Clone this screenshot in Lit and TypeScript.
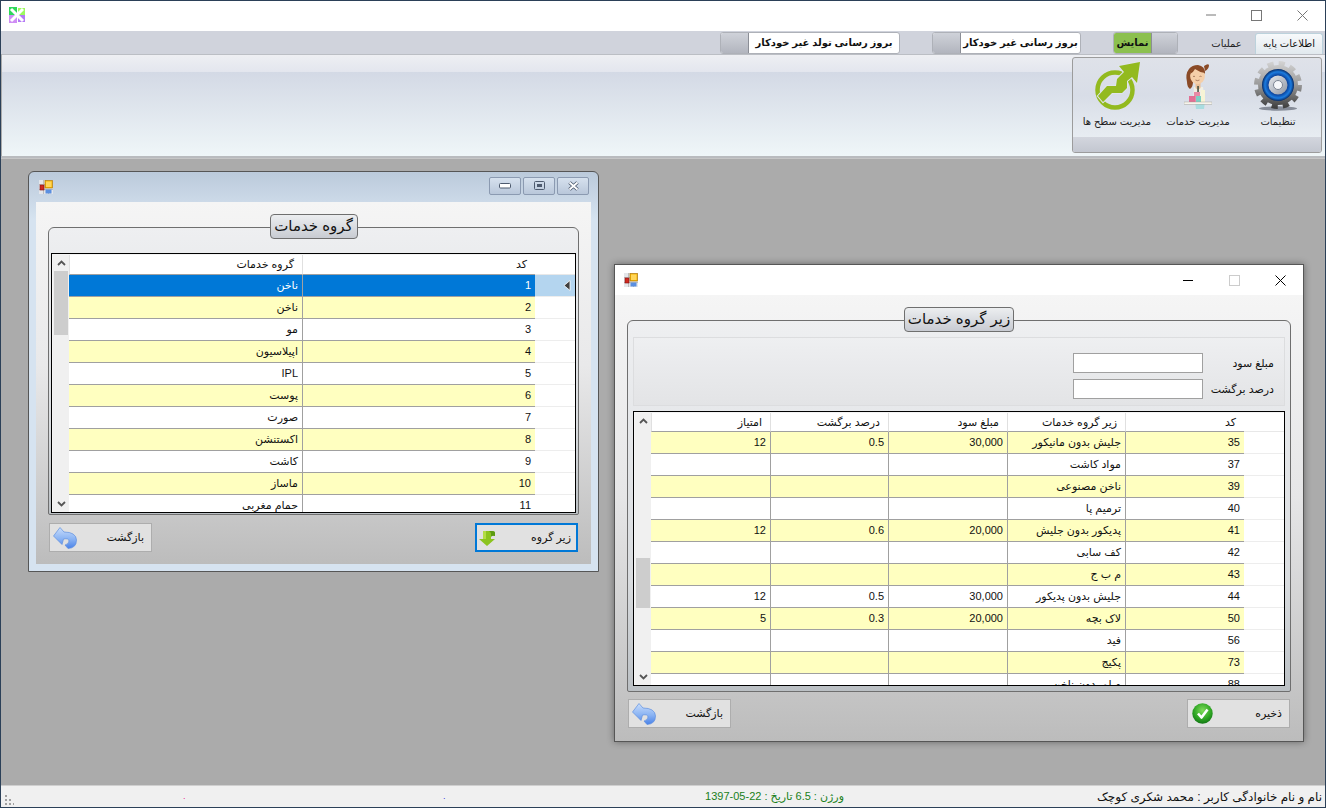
import { LitElement, html, css, svg } from "lit";
import { customElement } from "lit/decorators.js";

const groupRows: [string, string][] = [
  ["1", "ناخن"], ["2", "ناخن"], ["3", "مو"], ["4", "اپیلاسیون"], ["5", "IPL"], ["6", "پوست"],
  ["7", "صورت"], ["8", "اکستنشن"], ["9", "کاشت"], ["10", "ماساز"], ["11", "حمام مغربی"],
];
const subRows: string[][] = [
  ["35", "جلیش بدون مانیکور", "30,000", "0.5", "12"],
  ["37", "مواد کاشت", "", "", ""],
  ["39", "ناخن مصنوعی", "", "", ""],
  ["40", "ترمیم پا", "", "", ""],
  ["41", "پدیکور بدون جلیش", "20,000", "0.6", "12"],
  ["42", "کف سابی", "", "", ""],
  ["43", "م ب ج", "", "", ""],
  ["44", "جلیش بدون پدیکور", "30,000", "0.5", "12"],
  ["50", "لاک بچه", "20,000", "0.3", "5"],
  ["56", "فید", "", "", ""],
  ["73", "پکیج", "", "", ""],
  ["88", "میلو بدون ناخن", "", "", ""],
];

const winIcon = () => svg`<svg class="win-icon" viewBox="0 0 14 14" width="14" height="14">
  <rect x="0" y="0" width="14" height="14" fill="#e4e6ea"/>
  <path d="M0 4.5H6M0 9.5H14M4.5 0V14M9.5 9V14" stroke="#bdbdbd" stroke-width="1" fill="none"/>
  <rect x="6" y="0.5" width="7.5" height="7.5" fill="#f7b500" stroke="#b07a10" stroke-width=".7"/>
  <rect x="7" y="1.5" width="5.5" height="5.5" fill="#ffd65a"/>
  <rect x="1" y="5" width="4" height="5" fill="#d02a20" stroke="#801010" stroke-width=".6"/>
  <rect x="6.5" y="9.5" width="6" height="4" fill="#5b8fe0"/>
</svg>`;

const backIcon = () => svg`<svg class="btn-ico" viewBox="0 0 24 22" width="24" height="22">
  <defs><linearGradient id="bk" x1="0" y1="0" x2="0" y2="1"><stop offset="0" stop-color="#c8ddfb"/><stop offset=".55" stop-color="#8ab3f3"/><stop offset="1" stop-color="#4a82e8"/></linearGradient></defs>
  <path d="M7 .5 L.5 9 L9 17.5 L10.5 12 Q16 11 16 14 Q16 17 12 18 L15 21.5 Q23.5 21 23.5 13 Q23 5 11 5 Z" fill="url(#bk)" stroke="#5f8fe0" stroke-width=".7"/>
</svg>`;

const downIcon = () => svg`<svg class="btn-ico" viewBox="0 0 16 16" width="16" height="16">
  <path d="M4 1 H13 Q16 1 16 3 V6 Q14 5 12 6 V9 H16 L8 16 L0 9 H4 Z" fill="#8cc41f"/>
  <path d="M10 1 H13 Q16 1 16 3 V6 Q13 5 12 7 V3 Q11 2 10 1Z" fill="#5c9a12"/>
  <path d="M4 9 V1 H7 V9Z" fill="#b3dc45"/>
</svg>`;

const checkIcon = () => svg`<svg class="btn-ico" viewBox="0 0 21 21" width="21" height="21">
  <defs><radialGradient id="ck" cx=".5" cy=".35" r=".7"><stop offset="0" stop-color="#7fdc5a"/><stop offset=".6" stop-color="#2ea523"/><stop offset="1" stop-color="#0d6e12"/></radialGradient></defs>
  <circle cx="10.5" cy="10.5" r="10.2" fill="url(#ck)"/>
  <path d="M6 10.5 L9.5 14.5 L15.5 6.5" fill="none" stroke="#fff" stroke-width="2.6" stroke-linejoin="round"/>
</svg>`;

const gearIcon = () => svg`<svg viewBox="0 0 48 50" width="48" height="50">
  <defs>
    <linearGradient id="gr" gradientUnits="userSpaceOnUse" x1="0" y1="0" x2="0" y2="48"><stop offset="0" stop-color="#d4d4d4"/><stop offset=".5" stop-color="#989898"/><stop offset="1" stop-color="#3a3a3a"/></linearGradient>
    <radialGradient id="bl" cx=".5" cy=".5" r=".5"><stop offset=".58" stop-color="#0a3f98"/><stop offset=".82" stop-color="#1c7ce0"/><stop offset="1" stop-color="#062a66"/></radialGradient>
    <linearGradient id="dk" x1="0" y1="0" x2="1" y2="1"><stop offset="0" stop-color="#e6e8ec"/><stop offset="1" stop-color="#8f96a3"/></linearGradient>
  </defs>
  <ellipse cx="24" cy="47.5" rx="19" ry="2.2" fill="#4c5360" opacity=".6"/>
  <circle cx="24" cy="24" r="21" fill="none" stroke="url(#gr)" stroke-width="6" stroke-dasharray="6 5"/>
  <circle cx="24" cy="24" r="20" fill="url(#gr)"/>
  <circle cx="24" cy="24" r="16" fill="url(#bl)"/>
  <circle cx="24" cy="24" r="9.5" fill="url(#dk)"/>
  <circle cx="24" cy="24" r="4.5" fill="#f6f7fa" stroke="#7d8593"/>
</svg>`;

const womanIcon = () => svg`<svg viewBox="0 0 28 46" width="28" height="46">
  <path d="M11 38 H21 L20 46 H12 Z" fill="#a9dde0"/>
  <path d="M10 24 H19 L21 38 H9 Z" fill="#f2efe3"/>
  <path d="M11.5 19 H16.5 V25 L14 27 L11.5 25 Z" fill="#eabf98"/>
  <path d="M13.3 23 H14.8 V31 H13.3Z" fill="#3c4a3c"/>
  <path d="M20 3 Q24 0 25 2 Q25 6 21 8Z" fill="#8a4a26"/>
  <path d="M5 6 Q1 11 3 19 Q3 24 6 26 Q9 24 9 19 Q16 18 21 10 Q21 3 14 2 Q8 2 5 6Z" fill="#8a4a26"/>
  <ellipse cx="13.5" cy="13" rx="7.4" ry="8.3" fill="#f5cfa9"/>
  <path d="M6 11 Q8 4 14 4 Q20 4 21 10 Q15 9 11 6 Q9 10 6 11Z" fill="#8a4a26"/>
  <path d="M9 13.5 Q10 13 11 13.5 M15.5 13.5 Q16.5 13 17.5 13.5 M11.5 17 Q13.5 18.3 15.5 17" stroke="#7a4a30" stroke-width=".6" fill="none"/>
  <rect x="10" y="29" width="6" height="10" fill="#e88aa6"/>
  <rect x="12" y="33" width="5" height="6" fill="#7ccfc4"/>
  <rect x="17" y="27" width="4" height="12" fill="#f7f4d6"/>
  <rect x="5" y="33" width="6" height="6" fill="#e26f94"/>
  <rect x="0" y="39" width="28" height="2.2" fill="#f7f4ec" stroke="#9a9a90" stroke-width=".4"/>
</svg>`;

const growthIcon = () => svg`<svg viewBox="0 0 46 48" width="46" height="48">
  <circle cx="21" cy="28" r="17.5" fill="none" stroke="#93ba1f" stroke-width="4.5"/>
  <path d="M46 0 L25 4 L30 10 L23 17 L22 24 L13 24 L4 34 L9 40 L18 31 L28 31 L33 26 L33 19 L38 15 L43 21 Z" fill="#93ba1f" stroke="#dfe4ec" stroke-width="2" paint-order="stroke"/>
</svg>`;

@customElement("app-root")
export class AppRoot extends LitElement {
  static styles = css`
    :host {
      display: flex; flex-direction: column; width: 1326px; height: 808px; box-sizing: border-box;
      border: 1px solid #2b4058; background: #ababab; overflow: hidden;
      font-family: "Liberation Sans", "DejaVu Sans", sans-serif; font-size: 11px; color: #111;
    }
    * { box-sizing: border-box; }
    svg { display: block; flex: none; }

    .titlebar { height: 30px; background: #fff; display: flex; align-items: flex-start; justify-content: space-between; padding-left: 8px; }
    .logo { margin-top: 6px; }
    .caption { display: flex; }
    .cap { width: 45.5px; height: 30px; display: flex; align-items: center; justify-content: center; padding-bottom: 2px; }

    .tabs { height: 23px; background: #d0d3dc; display: flex; direction: rtl; padding: 1px 2px 0 0; align-items: flex-start; }
    .tab-on { width: 68px; height: 22px; margin-top: 1px; background: linear-gradient(#f7f9fb, #e0e8ed); border: 1px solid #bcd2dc; border-bottom: 0; border-radius: 3px 3px 0 0; text-align: center; line-height: 20px; font-size: 10px; }
    .tab { width: 57px; height: 22px; text-align: center; line-height: 22px; font-size: 10px; color: #222; margin-top: 1px; }
    .toggle { display: flex; height: 22px; border: 1px solid #aeb1b8; border-radius: 3px; overflow: hidden; background: #fff; }
    .toggle .knob { background: linear-gradient(#cfd2d9, #b2b5be); border-inline-start: 1px solid #8b8e96; }
    .toggle .txt { font-weight: 700; font-size: 10px; line-height: 20px; text-align: center; white-space: nowrap; }
    .t-show { width: 65px; margin-right: 20px; }
    .t-show .knob { width: 26px; border-inline-start: 0; border-inline-end: 1px solid #8b8e96; }
    .t-show .txt { flex: 1; background: #8cc04f; }
    .t-auto { width: 149px; margin-right: 32px; }
    .t-birth { width: 180px; margin-right: 32px; }
    .t-auto .txt, .t-birth .txt { flex: 1; }
    .t-auto .knob, .t-birth .knob { width: 28px; }

    .ribbon { height: 102px; margin-left: 1px; border-top: 1px solid #bbbec4; display: flex; direction: rtl; padding: 2px 3px 0 0;
      background: linear-gradient(to bottom, #eeeff3 0, #e3e6ee 17px, #d3d9e5 17px, #eff6f8 100%); }
    .panel { width: 250px; height: 96px; border: 1px solid #9c9c9c; border-radius: 3px; display: flex; flex-direction: column;
      background: linear-gradient(#dfe2e9, #d8dde7 40%, #e8edf2 85%); overflow: hidden; }
    .items { flex: 1; display: flex; padding-top: 2px; }
    .item { display: flex; flex-direction: column; align-items: center; }
    .item .ico { height: 51px; display: flex; align-items: center; }
    .item .lbl { margin-top: 3px; font-size: 10px; white-space: nowrap; line-height: 16px; color: #222; }
    .i1 { width: 80px; margin-right: 3px; }
    .i2 { width: 80px; }
    .i3 { width: 82px; }
    .band { height: 15px; background: linear-gradient(#d3d6de, #c3c7d0); }
    .rib-sep { height: 3px; background: linear-gradient(#b9bbbe 0 2px, #c6c6c6 2px); }

    .desktop { position: relative; flex: 1; background: #ababab; }
    .win { position: absolute; display: flex; flex-direction: column; border: 1px solid #565656; }
    .win-a { left: 27px; top: 12px; width: 571px; height: 401px; border-radius: 6px 6px 0 0; padding: 0 7px 7px; background: linear-gradient(#bbcadb, #d6e3f0 12%, #d6e3f0); }
    .win-b { left: 613px; top: 105px; width: 690px; height: 478px; box-shadow: 0 0 7px rgba(0, 0, 0, .4); background: #fff; }

    .wt { height: 30px; flex: none; display: flex; align-items: center; justify-content: space-between; }
    .win-a .wt { padding: 0 2px 0 3px; }
    .win-b .wt { padding-left: 9px; }
    .skin-btns { display: flex; gap: 2px; margin-top: -3px; }
    .skin { width: 32px; height: 18px; border: 1px solid #8b9ab1; border-radius: 2px; background: linear-gradient(#d6e1ee, #b9c7da); display: flex; align-items: center; justify-content: center; }
    .sys { display: flex; align-items: center; }
    .sys span { width: 46px; height: 30px; display: flex; align-items: center; justify-content: center; }

    .client { flex: 1; min-height: 0; background: linear-gradient(#f5f5f5, #e9e9ea 45%, #bcbcbc); padding-top: 25px; display: flex; flex-direction: column; }
    .win-b .client { background: linear-gradient(#f5f5f5, #e6e6e7 45%, #bcbcbc); }

    .group { position: relative; margin: 0 12px; border: 1px solid #6f6f6f; border-radius: 6px 6px 2px 2px; flex: none; display: flex; flex-direction: column;
      background: linear-gradient(#eeeff1, #d9dcdf 70%, #bbc0c4); }
    .g-a { height: 288px; padding: 25px 2px 1px 2px; }
    .g-b { height: 372px; padding: 16px 5px 5px 5px; }
    .legend { position: absolute; top: -14px; left: 50%; transform: translateX(-50%); height: 25px; border: 1px solid #6f6f6f; border-radius: 4px; direction: rtl;
      background: linear-gradient(#eceef0, #c8cbd2); font-size: 15px; line-height: 22px; text-align: center; white-space: nowrap; }
    .l-a { width: 88px; }
    .l-b { width: 110px; }

    .params { height: 69px; margin-bottom: 5px; border: 1px solid #dcdddf; direction: rtl; padding: 15px 10px 0 0; display: grid; grid-template-columns: 71px 130px; grid-auto-rows: 20px; row-gap: 6px; justify-content: start;
      background: linear-gradient(#eeeff1, #e3e4e6); }
    .params label { font-size: 11px; line-height: 20px; }
    .params input { width: 130px; height: 20px; border: 1px solid #a0a0a0; background: #fff; padding: 0; margin: 0; outline: none; }

    .grid { flex: 1; min-height: 0; border: 1px solid #000; background: #f4f4f4; padding: 1px 0 0 1px; display: flex; direction: rtl; }
    .gbody { flex: 1; min-width: 0; overflow: hidden; background: #fff; }
    .row { display: grid; height: 22px; }
    .ga .row, .ga .head { grid-template-columns: 40px 233px 233px; }
    .gb .row, .gb .head { grid-template-columns: 40px 119px 118px 119px 118px 119px; }
    .head { display: grid; }
    .ga .head { height: 20px; }
    .gb .head { height: 19px; }
    .hc { border-inline-end: 1px solid #e0e0e0; border-bottom: 1px solid #a0a0a0; padding-inline-start: 8px; line-height: 18px; font-size: 11px; white-space: nowrap; overflow: hidden; }
    .hc.rh { border-bottom-color: #e8e8e8; }
    .c { border-inline-end: 1px solid #a0a0a0; border-bottom: 1px solid #a0a0a0; padding-inline-start: 4px; line-height: 21px; font-size: 11px; white-space: nowrap; overflow: hidden; background: #fff; }
    .c:last-child { border-inline-end: 0; }
    .alt .c { background: #ffffc0; }
    .rh { background: #fff; border-inline-end: 0; border-bottom: 1px solid #ededed; display: flex; align-items: center; justify-content: flex-start; }
    .sel .c { background: #0078d7; color: #fff; }
    .sel .rh { background: #b4d5ef; padding-inline-start: 4px; }

    .sb { width: 16px; flex: none; background: #f0f0f0; display: flex; flex-direction: column; }
    .sb .arr { height: 16px; flex: none; display: flex; align-items: center; justify-content: center; }
    .sb .fill { flex: 1; }
    .thumb { background: #cdcdcd; flex: none; margin: 0 1px; }
    .ga .thumb { height: 64px; }
    .gb .thumb { height: 50px; margin-top: 129px; }

    .actions { display: flex; justify-content: space-between; padding: 0 13px; flex: none; }
    .a-a { margin-top: 8px; }
    .a-b { margin-top: 7px; }
    .btn { width: 103px; height: 29px; background: #e1e1e1; border: 1px solid #adadad; display: flex; align-items: center; justify-content: space-between; padding: 0 7px 0 3px; font-size: 11px; direction: ltr; }
    .btn.focus { border: 2px solid #0078d7; padding: 0 5px 0 2px; }
    .btn .t { direction: rtl; }
    .check { margin-left: 1px; }

    .status { height: 22px; flex: none; background: #f0f0f0; border-top: 1px solid #cfcfcf; display: grid; grid-template-columns: 182px 260px 260px 1fr; align-items: center; position: relative; }
    .grip { position: absolute; left: 3px; bottom: 2px; }
    .mark { line-height: 14px; font-size: 9px; margin-top: -1px; }
    .m1 { color: #e91e8c; }
    .m2 { color: #3a3ae0; }
    .status-right { display: flex; align-items: center; justify-content: space-between; min-width: 0; }
    .ver { direction: rtl; color: #1a7f1a; text-align: right; width: 141px; white-space: nowrap; font-size: 11px; }
    .user { direction: rtl; text-align: right; padding-right: 3px; font-size: 12px; white-space: nowrap; color: #111; }
  `;

  private chevron(up: boolean) {
    return svg`<svg width="9" height="6" viewBox="0 0 9 6"><path d="${up ? "M1 5 L4.5 1.5 L8 5" : "M1 1 L4.5 4.5 L8 1"}" fill="none" stroke="#555" stroke-width="1.8"/></svg>`;
  }

  private scrollbar() {
    return html`<div class="sb"><div class="arr">${this.chevron(true)}</div><div class="thumb"></div><div class="fill"></div><div class="arr">${this.chevron(false)}</div></div>`;
  }

  render() {
    return html`
      <div class="titlebar">
        <svg class="logo" width="16" height="16" viewBox="0 0 16 16">
          <rect x="0" y="0" width="8" height="8" fill="#2ed85a"/><rect x="9" y="1" width="7" height="7" fill="#9cf95f"/>
          <rect x="0" y="8" width="8" height="8" fill="#cf8df5"/><rect x="9" y="8" width="7" height="7" fill="#b47af5"/>
          <path d="M2 2 L14 14 M14 2 L2 14" stroke="#fff" stroke-width="3"/>
        </svg>
        <div class="caption">
          <div class="cap"><svg width="10" height="2" viewBox="0 0 10 2"><path d="M0 1H10" stroke="#777"/></svg></div>
          <div class="cap"><svg width="11" height="11" viewBox="0 0 11 11"><rect x=".5" y=".5" width="10" height="10" fill="none" stroke="#777"/></svg></div>
          <div class="cap"><svg width="11" height="11" viewBox="0 0 11 11"><path d="M.5 .5L10.5 10.5M10.5 .5L.5 10.5" stroke="#777"/></svg></div>
        </div>
      </div>

      <div class="tabs">
        <div class="tab-on">اطلاعات پایه</div>
        <div class="tab">عملیات</div>
        <div class="toggle t-show"><div class="knob"></div><div class="txt">نمایش</div></div>
        <div class="toggle t-auto"><div class="txt">بروز رسانی غیر خودکار</div><div class="knob"></div></div>
        <div class="toggle t-birth"><div class="txt">بروز رسانی تولد غیر خودکار</div><div class="knob"></div></div>
      </div>

      <div class="ribbon">
        <div class="panel">
          <div class="items">
            <div class="item i1"><div class="ico">${gearIcon()}</div><div class="lbl">تنظیمات</div></div>
            <div class="item i2"><div class="ico">${womanIcon()}</div><div class="lbl">مدیریت خدمات</div></div>
            <div class="item i3"><div class="ico">${growthIcon()}</div><div class="lbl">مدیریت سطح ها</div></div>
          </div>
          <div class="band"></div>
        </div>
      </div>
      <div class="rib-sep"></div>

      <div class="desktop">
        <section class="win win-a">
          <div class="wt">
            ${winIcon()}
            <div class="skin-btns">
              <div class="skin"><svg width="12" height="6" viewBox="0 0 12 6"><rect x=".5" y=".5" width="11" height="4.5" rx="1" fill="#fff" stroke="#4d5a6e"/></svg></div>
              <div class="skin"><svg width="11" height="9" viewBox="0 0 11 9"><rect x=".5" y=".5" width="10" height="8" rx="1" fill="none" stroke="#4d5a6e"/><rect x="3" y="3" width="5" height="3" fill="#4d5a6e"/></svg></div>
              <div class="skin"><svg width="13" height="10" viewBox="0 0 13 10"><path d="M2.5 1.5L10.5 8.5M10.5 1.5L2.5 8.5" stroke="#4d5a6e" stroke-width="3.6"/><path d="M2.5 1.5L10.5 8.5M10.5 1.5L2.5 8.5" stroke="#fff" stroke-width="1.8"/></svg></div>
            </div>
          </div>
          <div class="client">
            <div class="group g-a">
              <div class="legend l-a">گروه خدمات</div>
              <div class="grid ga">
                <div class="gbody">
                  <div class="head"><div class="hc rh"></div><div class="hc">کد</div><div class="hc">گروه خدمات</div></div>
                  ${groupRows.map((r, i) => html`
                    <div class="row ${i === 0 ? "sel" : i % 2 ? "alt" : ""}">
                      <div class="rh">${i === 0 ? svg`<svg width="8" height="11" viewBox="0 0 8 11"><path d="M7 .5V10.5L1 5.5Z" fill="#3f3f3f" stroke="#fff" stroke-width=".8"/></svg>` : ""}</div>
                      <div class="c">${r[0]}</div><div class="c">${r[1]}</div>
                    </div>`)}
                </div>
                ${this.scrollbar()}
              </div>
            </div>
            <div class="actions a-a">
              <div class="btn">${backIcon()}<span class="t">بازگشت</span></div>
              <div class="btn focus">${downIcon()}<span class="t">زیر گروه</span></div>
            </div>
          </div>
        </section>

        <section class="win win-b">
          <div class="wt">
            ${winIcon()}
            <div class="sys">
              <span><svg width="10" height="1" viewBox="0 0 10 1"><path d="M0 .5H10" stroke="#000"/></svg></span>
              <span><svg width="11" height="11" viewBox="0 0 11 11"><rect x=".5" y=".5" width="10" height="10" fill="none" stroke="#ccc"/></svg></span>
              <span><svg width="11" height="11" viewBox="0 0 11 11"><path d="M.5 .5L10.5 10.5M10.5 .5L.5 10.5" stroke="#000"/></svg></span>
            </div>
          </div>
          <div class="client">
            <div class="group g-b">
              <div class="legend l-b">زیر گروه خدمات</div>
              <div class="params">
                <label>مبلغ سود</label><input />
                <label>درصد برگشت</label><input />
              </div>
              <div class="grid gb">
                <div class="gbody">
                  <div class="head">
                    <div class="hc rh"></div><div class="hc">کد</div><div class="hc">زیر گروه خدمات</div><div class="hc">مبلغ سود</div><div class="hc">درصد برگشت</div><div class="hc">امتیاز</div>
                  </div>
                  ${subRows.map((r, i) => html`
                    <div class="row ${i < 11 && i % 2 === 0 ? "alt" : ""}">
                      <div class="rh"></div>
                      ${r.map((v) => html`<div class="c">${v}</div>`)}
                    </div>`)}
                </div>
                ${this.scrollbar()}
              </div>
            </div>
            <div class="actions a-b">
              <div class="btn">${backIcon()}<span class="t">بازگشت</span></div>
              <div class="btn"><span class="check">${checkIcon()}</span><span class="t">ذخیره</span></div>
            </div>
          </div>
        </section>
      </div>

      <footer class="status">
        <svg class="grip" width="10" height="11" viewBox="0 0 10 11"><path d="M1 1h2v2H1zM1 5h2v2H1zM5 5h2v2H5zM1 9h2v2H1zM5 9h2v2H5zM9 9h1v2H9z" fill="#a0a0a0"/></svg>
        <span></span>
        <span class="mark m1">.</span>
        <span class="mark m2">.</span>
        <div class="status-right">
          <div class="ver">ورژن : 6.5 تاریخ : 22-05-1397</div>
          <div class="user">نام و نام خانوادگی کاربر :  محمد شکری کوچک</div>
        </div>
      </footer>
    `;
  }
}
